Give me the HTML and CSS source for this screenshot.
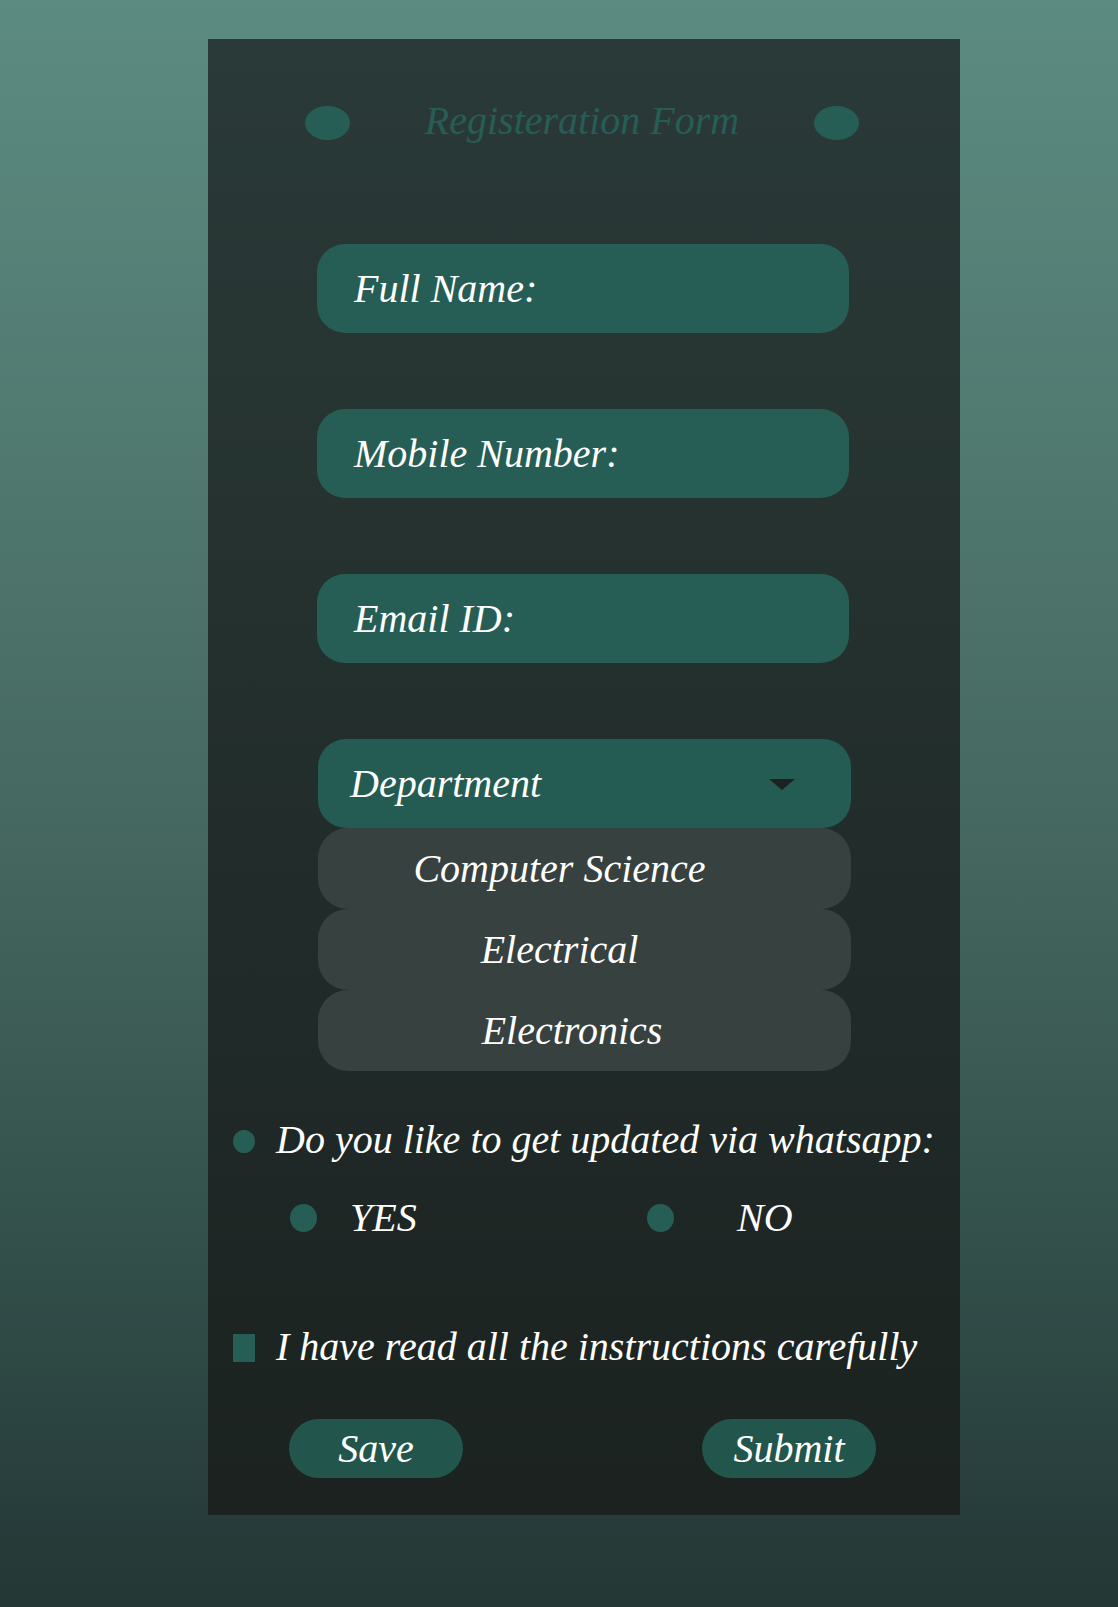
FILE: index.html
```html
<!DOCTYPE html>
<html lang="en">
<head>
<meta charset="utf-8">
<title>Registeration Form</title>
<link rel="stylesheet" href="styles.css">
</head>
<body>
<form class="card">
  <div class="title-row">
    <span class="title-dot"></span>
    <h1 class="title">Registeration Form</h1>
    <span class="title-dot"></span>
  </div>

  <div class="fields">
    <div class="field">Full Name:</div>
    <div class="field">Mobile Number:</div>
    <div class="field">Email ID:</div>
    <div class="dropdown">
      <div class="select">
        <span>Department</span>
        <span class="caret"></span>
      </div>
      <div class="option option-cs">Computer Science</div>
      <div class="option option-el">Electrical</div>
      <div class="option option-ec">Electronics</div>
    </div>
  </div>

  <div class="question">
    <span class="bullet"></span>
    <span>Do you like to get updated via whatsapp:</span>
  </div>

  <div class="choices">
    <div class="choice">
      <span class="radio"></span>
      <span class="choice-label yes">YES</span>
    </div>
    <div class="choice">
      <span class="radio"></span>
      <span class="choice-label no">NO</span>
    </div>
  </div>

  <div class="agree">
    <span class="check"></span>
    <span>I have read all the instructions carefully</span>
  </div>

  <div class="buttons">
    <span class="btn">Save</span>
    <span class="btn">Submit</span>
  </div>
</form>
</body>
</html>
```

FILE: styles.css
```css
html, body {
  margin: 0;
  padding: 0;
}

body {
  min-height: 1607px;
  background: linear-gradient(to bottom,
    #5c8b81 0px,
    #527b72 400px,
    #466961 800px,
    #35534d 1200px,
    #283e3c 1500px,
    #243734 1607px);
  font-family: "Liberation Serif", "Times New Roman", serif;
  font-style: italic;
  font-size: 40px;
  color: #ffffff;
  padding-top: 39px;
  box-sizing: border-box;
}

.card {
  margin: 0 0 0 208px;
  width: 752px;
  height: 1476px;
  box-sizing: border-box;
  background: linear-gradient(to bottom, #2a3a38 0%, #1b2220 100%);
  padding-top: 58px;
  display: flex;
  flex-direction: column;
}

.title-row {
  display: flex;
  justify-content: center;
  align-items: center;
  gap: 75px;
  padding-right: 4px;
}

.title-dot {
  width: 45px;
  height: 34px;
  border-radius: 50%;
  background: #265e55;
  margin-top: 5px;
}

.title {
  margin: 0;
  font-size: 40px;
  font-weight: normal;
  font-style: italic;
  color: #265e55;
  line-height: normal;
}

.fields {
  margin-top: 100px;
  display: flex;
  flex-direction: column;
  align-items: center;
  gap: 76px;
  padding-right: 2px;
}

.field {
  width: 532px;
  height: 89px;
  box-sizing: border-box;
  border-radius: 28px;
  background: #265e55;
  padding-left: 37px;
  display: flex;
  align-items: center;
}

.dropdown {
  width: 533px;
  margin-left: 3px;
}

.select {
  height: 89px;
  box-sizing: border-box;
  border-radius: 28px;
  background: #245c53;
  padding-left: 32px;
  padding-right: 56px;
  display: flex;
  align-items: center;
  justify-content: space-between;
}

.caret {
  width: 0;
  height: 0;
  border-left: 13px solid transparent;
  border-right: 13px solid transparent;
  border-top: 11px solid #1d2121;
  margin-top: 2px;
}

.option {
  height: 81px;
  box-sizing: border-box;
  border-radius: 30px;
  background: #374140;
  display: flex;
  align-items: center;
  justify-content: center;
  padding-right: 50px;
}

.option-ec {
  padding-right: 25px;
}

.question {
  margin-top: 45px;
  margin-left: 25px;
  display: flex;
  align-items: center;
  gap: 21px;
}

.bullet {
  width: 22px;
  height: 23px;
  border-radius: 50%;
  background: #265e55;
  margin-top: 4px;
}

.choices {
  margin-top: 31px;
  margin-left: 82px;
  display: grid;
  grid-template-columns: 357px auto;
}

.choice {
  display: flex;
  align-items: center;
}

.radio {
  width: 27px;
  height: 28px;
  border-radius: 50%;
  background: #265e55;
}

.choice-label.yes {
  margin-left: 33px;
}

.choice-label.no {
  margin-left: 63px;
}

.agree {
  margin-top: 82px;
  margin-left: 25px;
  display: flex;
  align-items: center;
  gap: 21px;
}

.check {
  width: 22px;
  height: 28px;
  background: #265e55;
  margin-top: 3px;
}

.buttons {
  margin-top: 49px;
  margin-left: 81px;
  display: flex;
  gap: 239px;
}

.btn {
  width: 174px;
  height: 59px;
  border-radius: 30px;
  background: #22564d;
  display: flex;
  align-items: center;
  justify-content: center;
}
```
